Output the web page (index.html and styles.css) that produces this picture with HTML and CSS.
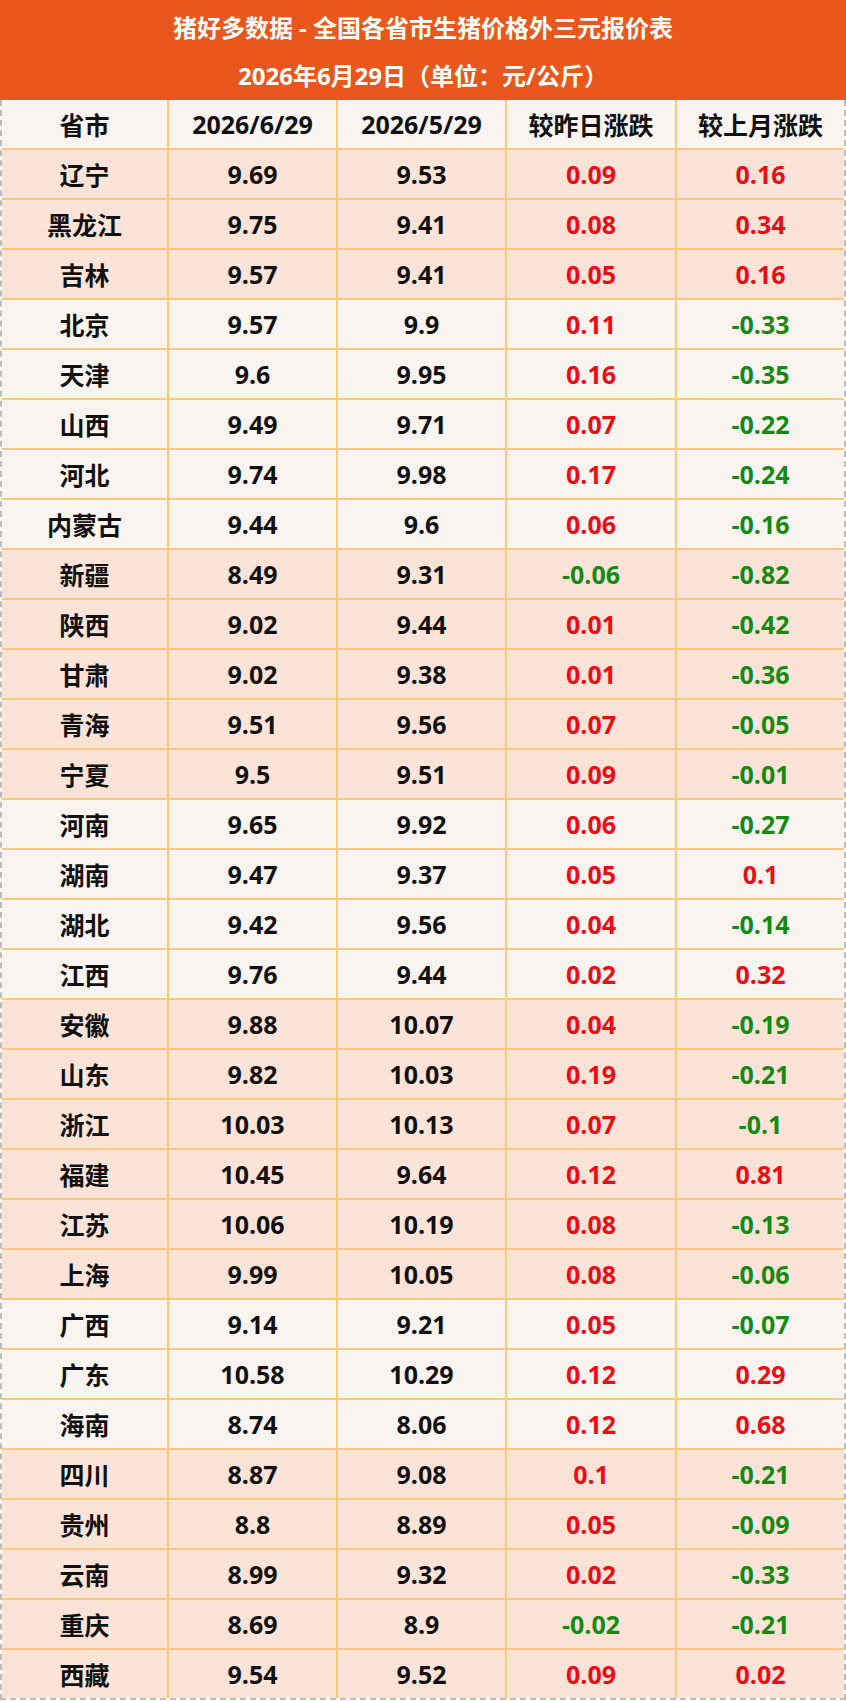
FILE: index.html
```html
<!DOCTYPE html>
<html lang="zh-CN">
<head>
<meta charset="utf-8">
<title>猪好多数据 - 全国各省市生猪价格外三元报价表</title>
<link rel="stylesheet" href="styles.css">
</head>
<body>
<div class="sheet">
  <div class="banner">
    <div class="banner-line">猪好多数据 - 全国各省市生猪价格外三元报价表</div>
    <div class="banner-line">2026年6月29日（单位：元/公斤）</div>
  </div>
  <div class="table">
    <div class="row row-light"><div class="cell">省市</div><div class="cell">2026/6/29</div><div class="cell">2026/5/29</div><div class="cell">较昨日涨跌</div><div class="cell">较上月涨跌</div></div>
    <div class="row row-peach"><div class="cell">辽宁</div><div class="cell">9.69</div><div class="cell">9.53</div><div class="cell up">0.09</div><div class="cell up">0.16</div></div>
    <div class="row row-peach"><div class="cell">黑龙江</div><div class="cell">9.75</div><div class="cell">9.41</div><div class="cell up">0.08</div><div class="cell up">0.34</div></div>
    <div class="row row-peach"><div class="cell">吉林</div><div class="cell">9.57</div><div class="cell">9.41</div><div class="cell up">0.05</div><div class="cell up">0.16</div></div>
    <div class="row row-light"><div class="cell">北京</div><div class="cell">9.57</div><div class="cell">9.9</div><div class="cell up">0.11</div><div class="cell down">-0.33</div></div>
    <div class="row row-light"><div class="cell">天津</div><div class="cell">9.6</div><div class="cell">9.95</div><div class="cell up">0.16</div><div class="cell down">-0.35</div></div>
    <div class="row row-light"><div class="cell">山西</div><div class="cell">9.49</div><div class="cell">9.71</div><div class="cell up">0.07</div><div class="cell down">-0.22</div></div>
    <div class="row row-light"><div class="cell">河北</div><div class="cell">9.74</div><div class="cell">9.98</div><div class="cell up">0.17</div><div class="cell down">-0.24</div></div>
    <div class="row row-light"><div class="cell">内蒙古</div><div class="cell">9.44</div><div class="cell">9.6</div><div class="cell up">0.06</div><div class="cell down">-0.16</div></div>
    <div class="row row-peach"><div class="cell">新疆</div><div class="cell">8.49</div><div class="cell">9.31</div><div class="cell down">-0.06</div><div class="cell down">-0.82</div></div>
    <div class="row row-peach"><div class="cell">陕西</div><div class="cell">9.02</div><div class="cell">9.44</div><div class="cell up">0.01</div><div class="cell down">-0.42</div></div>
    <div class="row row-peach"><div class="cell">甘肃</div><div class="cell">9.02</div><div class="cell">9.38</div><div class="cell up">0.01</div><div class="cell down">-0.36</div></div>
    <div class="row row-peach"><div class="cell">青海</div><div class="cell">9.51</div><div class="cell">9.56</div><div class="cell up">0.07</div><div class="cell down">-0.05</div></div>
    <div class="row row-peach"><div class="cell">宁夏</div><div class="cell">9.5</div><div class="cell">9.51</div><div class="cell up">0.09</div><div class="cell down">-0.01</div></div>
    <div class="row row-light"><div class="cell">河南</div><div class="cell">9.65</div><div class="cell">9.92</div><div class="cell up">0.06</div><div class="cell down">-0.27</div></div>
    <div class="row row-light"><div class="cell">湖南</div><div class="cell">9.47</div><div class="cell">9.37</div><div class="cell up">0.05</div><div class="cell up">0.1</div></div>
    <div class="row row-light"><div class="cell">湖北</div><div class="cell">9.42</div><div class="cell">9.56</div><div class="cell up">0.04</div><div class="cell down">-0.14</div></div>
    <div class="row row-light"><div class="cell">江西</div><div class="cell">9.76</div><div class="cell">9.44</div><div class="cell up">0.02</div><div class="cell up">0.32</div></div>
    <div class="row row-peach"><div class="cell">安徽</div><div class="cell">9.88</div><div class="cell">10.07</div><div class="cell up">0.04</div><div class="cell down">-0.19</div></div>
    <div class="row row-peach"><div class="cell">山东</div><div class="cell">9.82</div><div class="cell">10.03</div><div class="cell up">0.19</div><div class="cell down">-0.21</div></div>
    <div class="row row-peach"><div class="cell">浙江</div><div class="cell">10.03</div><div class="cell">10.13</div><div class="cell up">0.07</div><div class="cell down">-0.1</div></div>
    <div class="row row-peach"><div class="cell">福建</div><div class="cell">10.45</div><div class="cell">9.64</div><div class="cell up">0.12</div><div class="cell up">0.81</div></div>
    <div class="row row-peach"><div class="cell">江苏</div><div class="cell">10.06</div><div class="cell">10.19</div><div class="cell up">0.08</div><div class="cell down">-0.13</div></div>
    <div class="row row-peach"><div class="cell">上海</div><div class="cell">9.99</div><div class="cell">10.05</div><div class="cell up">0.08</div><div class="cell down">-0.06</div></div>
    <div class="row row-light"><div class="cell">广西</div><div class="cell">9.14</div><div class="cell">9.21</div><div class="cell up">0.05</div><div class="cell down">-0.07</div></div>
    <div class="row row-light"><div class="cell">广东</div><div class="cell">10.58</div><div class="cell">10.29</div><div class="cell up">0.12</div><div class="cell up">0.29</div></div>
    <div class="row row-light"><div class="cell">海南</div><div class="cell">8.74</div><div class="cell">8.06</div><div class="cell up">0.12</div><div class="cell up">0.68</div></div>
    <div class="row row-peach"><div class="cell">四川</div><div class="cell">8.87</div><div class="cell">9.08</div><div class="cell up">0.1</div><div class="cell down">-0.21</div></div>
    <div class="row row-peach"><div class="cell">贵州</div><div class="cell">8.8</div><div class="cell">8.89</div><div class="cell up">0.05</div><div class="cell down">-0.09</div></div>
    <div class="row row-peach"><div class="cell">云南</div><div class="cell">8.99</div><div class="cell">9.32</div><div class="cell up">0.02</div><div class="cell down">-0.33</div></div>
    <div class="row row-peach"><div class="cell">重庆</div><div class="cell">8.69</div><div class="cell">8.9</div><div class="cell down">-0.02</div><div class="cell down">-0.21</div></div>
    <div class="row row-peach"><div class="cell">西藏</div><div class="cell">9.54</div><div class="cell">9.52</div><div class="cell up">0.09</div><div class="cell up">0.02</div></div>
  </div>
</div>
</body>
</html>
```

FILE: styles.css
```css
* { box-sizing: border-box; }

html, body {
  margin: 0;
  padding: 0;
  background: #ffffff;
}

body {
  font-family: "Open Sans", "Noto Sans CJK SC", sans-serif;
  font-weight: 700;
  color: #111111;
}

.sheet {
  width: 846px;
}

.banner {
  background: #e9571c;
  color: #ffffff;
  height: 100px;
  padding-top: 4px;
  text-align: center;
}

.banner-line {
  height: 48px;
  line-height: 48px;
  font-size: 24px;
  white-space: nowrap;
}

.table {
  border-left: 2px dashed #bdbdbd;
  border-right: 2px dashed #bdbdbd;
  border-bottom: 2px dashed #bdbdbd;
}

.row {
  display: grid;
  grid-template-columns: 167px 169px 169px 170px 167px;
  height: 50px;
  border-bottom: 2px solid #f8c97f;
}

.row:last-child {
  border-bottom: none;
  height: 48px;
}

.row-peach { background: #fbe4d7; }
.row-light { background: #f9f4f0; }

.cell {
  display: flex;
  align-items: center;
  justify-content: center;
  font-size: 25px;
  white-space: nowrap;
  border-right: 2px solid #f8c97f;
}

.cell:last-child { border-right: none; }

.up { color: #ee0b14; }
.down { color: #138a12; }
```
